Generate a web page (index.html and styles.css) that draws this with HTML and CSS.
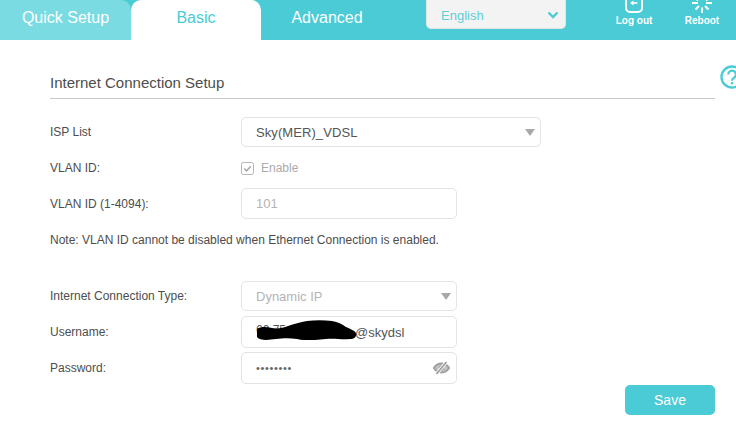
FILE: index.html
```html
<!DOCTYPE html>
<html lang="en">
<head>
<meta charset="utf-8">
<title>Internet Connection Setup</title>
<link rel="stylesheet" href="styles.css">
</head>
<body>
<header class="topbar">
  <nav class="tabs">
    <div class="tab tab-quick">Quick Setup</div>
    <div class="tab tab-basic">Basic</div>
    <div class="tab tab-advanced">Advanced</div>
  </nav>
  <div class="lang">
    <span>English</span>
    <svg class="lang-chevron" width="12" height="8" viewBox="0 0 12 8"><path d="M1.500 1.500 6 6l4.500-4.500" fill="none" stroke="#4acbd6" stroke-width="2.400"/></svg>
  </div>
  <div class="actions">
    <div class="action action-logout">
      <svg class="action-icon" width="20" height="13" viewBox="0 0 20 13"><path d="M2 0v8a4 4 0 0 0 4 4h8a4 4 0 0 0 4-4V0" fill="none" stroke="#fff" stroke-width="2"/><path d="M6 3 9.500 .5v5z" fill="#fff"/><path d="M9 3h4.500" stroke="#fff" stroke-width="1.600"/></svg>
      <span>Log out</span>
    </div>
    <div class="action action-reboot">
      <svg class="action-icon" width="22" height="13" viewBox="0 0 22 13"><path d="M11 7.500V13M8 6 4.500 9.500M14 6l3.500 3.500M1 3h6M15 3h6M7 .5 5.500-1M15 .5 16.500-1" fill="none" stroke="#fff" stroke-width="2"/></svg>
      <span>Reboot</span>
    </div>
  </div>
</header>
<main class="content">
  <div class="heading-row">
    <h2 class="heading">Internet Connection Setup</h2>
    <svg class="help" width="24" height="24" viewBox="0 0 24 24"><circle cx="12" cy="12" r="10.500" fill="none" stroke="#4acbd6" stroke-width="2.400"/><path d="M8.300 9.500a3.800 3.800 0 1 1 6 3c-1.500 1-2.300 1.600-2.300 3.200" fill="none" stroke="#4acbd6" stroke-width="2.200"/><rect x="10.800" y="17" width="2.400" height="2.400" fill="#4acbd6"/></svg>
  </div>
  <div class="row row-isp">
    <label class="label">ISP List</label>
    <div class="field field-wide"><span>Sky(MER)_VDSL</span><i class="caret"></i></div>
  </div>
  <div class="row row-check">
    <label class="label">VLAN ID:</label>
    <div class="check">
      <svg width="13" height="13" viewBox="0 0 13 13"><rect x=".5" y=".5" width="12" height="12" rx="2" fill="#fff" stroke="#b5b5b5"/><path d="M3.300 6.500 5.500 8.800 9.800 4.300" fill="none" stroke="#a8a8a8" stroke-width="1.500"/></svg>
      <span>Enable</span>
    </div>
  </div>
  <div class="row row-vlan">
    <label class="label">VLAN ID (1-4094):</label>
    <div class="field field-muted"><span>101</span></div>
  </div>
  <p class="note">Note: VLAN ID cannot be disabled when Ethernet Connection is enabled.</p>
  <div class="row row-type">
    <label class="label">Internet Connection Type:</label>
    <div class="field field-muted field-type"><span>Dynamic IP</span><i class="caret"></i></div>
  </div>
  <div class="row row-user">
    <label class="label">Username:</label>
    <div class="field field-user">
      <span class="user-hidden">60 75</span>
      <span class="user-domain">@skydsl</span>
      <svg class="scribble" width="100" height="20" viewBox="0 0 100 20"><path d="M0 9C4 6 10 7 15 8c5 1 11 0 16-2 6-2 12-4 19-5 8-1 17-1 25 0 6 1 10 3 14 6 4 2 8 3 10 6 1 3-1 6-6 6-8 1-15-1-24 0-9 1-20 2-29 0-7-1-13-1-21 0-7 1-16 2-19-2C-1 14-1 11 0 9z" fill="#000"/></svg>
    </div>
  </div>
  <div class="row row-pass">
    <label class="label">Password:</label>
    <div class="field field-pass">
      <span class="dots">••••••••</span>
      <svg class="eye" width="17" height="14" viewBox="0 0 17 14"><path d="M.8 7C3 3.800 5.500 2.500 8.500 2.500S14 3.800 16.200 7C14 10.200 11.500 11.500 8.500 11.500S3 10.200.8 7z" fill="#c4c4c4" stroke="#a0a0a0" stroke-width="2"/><circle cx="8.500" cy="7" r="2.600" fill="#a0a0a0"/><path d="M3.500 13 13.500 1" stroke="#fff" stroke-width="3.400"/><path d="M3.500 13 13.500 1" stroke="#a0a0a0" stroke-width="1.800"/></svg>
    </div>
  </div>
  <div class="footer"><button class="save" type="button">Save</button></div>
</main>
</body>
</html>
```
FILE: styles.css
```css
* { box-sizing: border-box; }
html, body { margin: 0; height: 428px; overflow: hidden; background: #fff; }
body { font-family: "Liberation Sans", Arial, sans-serif; font-size: 12px; color: #4d4d4d; }

.topbar { display: flex; height: 40px; background: #4acbd6; overflow: hidden; }
.tabs { display: flex; width: 426px; flex: none; }
.tab { height: 40px; font-size: 16px; line-height: 36px; text-align: center; color: #fff; }
.tab-quick { width: 131px; background: #7adbe2; border-top-right-radius: 10px; }
.tab-basic { width: 130px; background: #fff; color: #4acbd6; border-radius: 10px 10px 0 0; }
.tab-advanced { width: 165px; padding-right: 33px; }

.lang { width: 140px; height: 29px; flex: none; display: flex; align-items: center; justify-content: space-between; padding: 2px 6px 0 14px; background: #f3f3f3; border: 1px solid #e3e3e3; border-top: 0; border-radius: 0 0 5px 5px; font-size: 13px; color: #5fcfd9; }
.lang-chevron { display: block; }

.actions { display: flex; margin-left: 34px; }
.action { display: flex; flex-direction: column; align-items: center; width: 68px; font-size: 10px; font-weight: bold; color: #fff; }
.action-icon { display: block; height: 13px; flex: none; }
.action span { margin-top: 1px; line-height: 14px; }

.content { position: relative; padding: 0 21px 0 50px; }
.heading-row { height: 59px; border-bottom: 1px solid #c8c8c8; display: flex; align-items: flex-end; }
.heading { margin: 0 0 6px; font-size: 15px; font-weight: normal; line-height: 18px; color: #4d4d4d; }
.help { position: absolute; top: 25px; left: 720px; }

.row { display: flex; align-items: center; }
.label { width: 191px; flex: none; color: #4d4d4d; }
.field { position: relative; display: flex; align-items: center; width: 216px; height: 31px; padding: 0 14px; border: 1px solid #e3e3e3; border-radius: 5px; font-size: 13px; color: #555; background: #fff; }
.field-wide { width: 300px; height: 30px; padding: 0 15px 0 14px; letter-spacing: .08px; }
.field-muted { color: #b4b4b4; }
.caret { position: absolute; right: 5px; top: 11px; width: 0; height: 0; border-left: 5.500px solid transparent; border-right: 5.500px solid transparent; border-top: 7px solid #a9a9a9; }
.field-type { height: 30px; }

.row-isp { margin-top: 18px; }
.row-check { margin-top: 10px; height: 22px; }
.row-vlan { margin-top: 9px; }
.check { display: flex; align-items: center; gap: 7px; color: #aaa; }
.note { margin: 0; padding-top: 14px; height: 62px; line-height: 14px; color: #4d4d4d; }
.row-user { margin-top: 5px; }
.row-pass { margin-top: 4px; }
.field-user { height: 32px; }
.field-pass { height: 32px; justify-content: space-between; padding-right: 6px; }
.user-domain { margin-left: 99px; }
.user-hidden { position: absolute; left: 14px; top: 6px; font-size: 12px; }
.scribble { position: absolute; left: 15px; top: 3px; }
.dots { font-size: 11px; letter-spacing: .65px; color: #666; }
.eye { display: block; }

.footer { display: flex; justify-content: flex-end; margin-top: 1px; }
.save { width: 90px; height: 30px; padding: 0; border: 0; border-radius: 5px; background: #4acbd6; color: #fff; font: 14px "Liberation Sans", Arial, sans-serif; }
```
